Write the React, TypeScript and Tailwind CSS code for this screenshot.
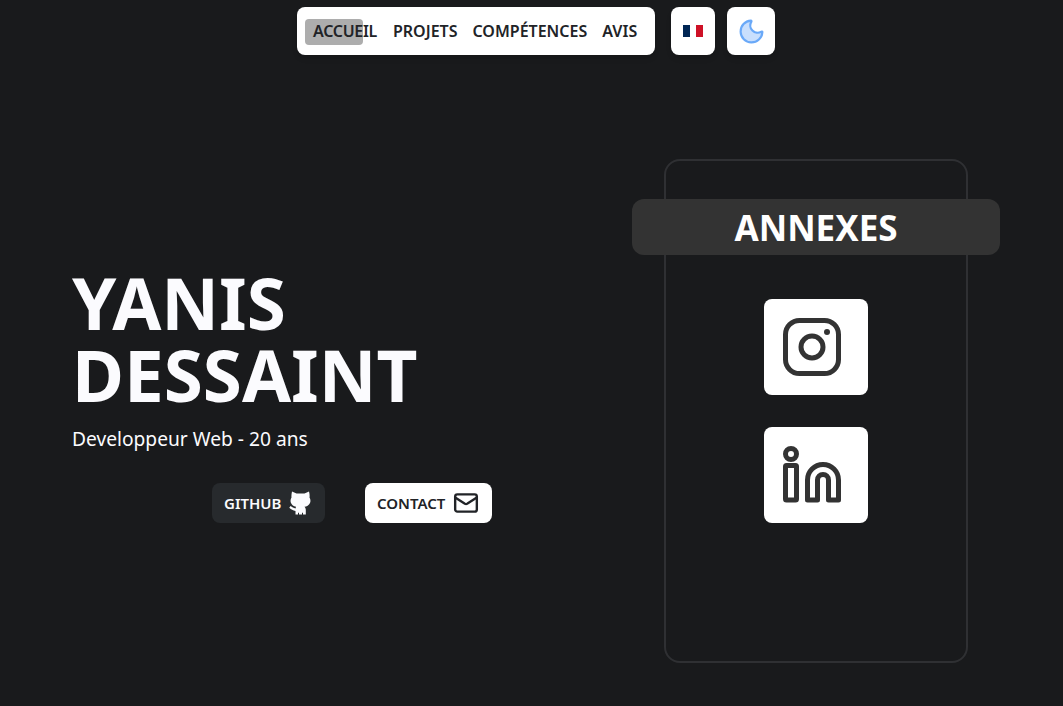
import { Mail, Moon } from 'lucide-react';

const font = { fontFamily: '"Noto Sans", "Open Sans", sans-serif' };

function Flag() {
  return (
    <div className="flex h-3 w-5">
      <span className="flex-1 bg-[#002654]" />
      <span className="flex-1 bg-white" />
      <span className="flex-1 bg-[#ce1126]" />
    </div>
  );
}

function Nav() {
  return (
    <nav className="flex justify-center gap-4 pt-[7px] pl-[9px]">
      <div className="relative flex h-12 w-[358px] items-center gap-4 rounded-lg bg-white pl-4 text-base font-semibold text-[#212327] shadow-md">
        <span className="absolute top-3 left-2 h-[26px] w-[58px] rounded bg-[#adadad]" />
        <a className="relative tracking-[-0.3px]">ACCUEIL</a>
        <a>PROJETS</a>
        <a className="-ml-[1px]">COMPÉTENCES</a>
        <a className="-ml-[1px]">AVIS</a>
      </div>
      <div className="flex gap-3">
        <button className="flex h-12 w-11 items-center justify-center rounded-lg bg-white shadow-md">
          <Flag />
        </button>
        <button className="flex h-12 w-12 items-center justify-center rounded-lg bg-white shadow-md">
          <Moon size={29} className="fill-[#c9dffd] text-[#6aa9f8]" strokeWidth={1.8} />
        </button>
      </div>
    </nav>
  );
}

function GithubCat() {
  return (
    <svg width="24" height="24" viewBox="0 0 24 24" fill="currentColor">
      <path d="M3 .5 7.5 2.5h8L20 .5c.6 2.4.8 4.4.5 6 1 1.6 1.3 3.5.5 5.5-1 2.5-3.500 3.500-5.500 3.700.9.900 1.300 2.300 1.300 3.300v4.500h-2.800v-1.800h-1v1.800h-3v-1.800h-1v1.800H6.500v-3.500C4 19.500 1.800 18.300.3 16.800l1.200-1.700c1.500 1 3.200 2 5 2.500l.5-1.900C4.500 15.300 2.800 14 2 12c-.8-2-.5-3.900.5-5.500-.2-1.600 0-3.600.5-6z" />
    </svg>
  );
}

function Hero() {
  return (
    <section className="w-[560px] pt-[212px] pl-[72px]">
      <h1 className="text-[71px] leading-[72px] font-bold text-[#fbfbfe]">
        YANIS
        <br />
        DESSAINT
      </h1>
      <p className="mt-[14px] text-[19.2px] leading-7 text-[#fbfbfe]">Developpeur Web - 20 ans</p>
      <div className="mt-[30px] ml-[140px] flex gap-10">
        <a className="flex h-10 w-[113px] items-center gap-2 rounded-lg bg-[#272a2d] pl-3 text-[15px] font-semibold text-[#fbfbfe]">
          GITHUB
          <GithubCat />
        </a>
        <a className="flex h-10 w-[127px] items-center gap-2 rounded-lg bg-white pl-3 text-[15px] font-semibold text-[#212327]">
          CONTACT
          <Mail size={26} strokeWidth={2.2} />
        </a>
      </div>
    </section>
  );
}

function Instagram() {
  return (
    <svg width="64" height="64" viewBox="0 0 64 64" fill="none" stroke="#333333" strokeWidth="5">
      <rect x="5.500" y="5.500" width="53" height="53" rx="14" />
      <circle cx="32" cy="32" r="11" />
      <circle cx="47" cy="17" r="3" fill="#333333" stroke="none" />
    </svg>
  );
}

function Linkedin() {
  return (
    <svg width="64" height="64" viewBox="0 0 64 64" fill="none" stroke="#333333" strokeWidth="5" strokeLinejoin="round">
      <circle cx="11" cy="11" r="5.500" />
      <rect x="5.500" y="22.500" width="11" height="34.500" rx="1" />
      <path d="M27.500 57V37a15.500 15.500 0 0 1 31 0v20h-10V37a5.500 5.500 0 0 0-11 0v20z" />
    </svg>
  );
}

function Annexes() {
  return (
    <aside className="mt-[104px] ml-[104px] flex h-[504px] w-[304px] flex-col items-center rounded-2xl border-2 border-[#2f3033] pt-[38px]">
      <div className="flex h-14 w-[368px] shrink-0 items-center justify-center rounded-xl bg-[#333333] pt-[2px] text-[35px] font-bold text-white">
        ANNEXES
      </div>
      <div className="mt-11 flex flex-col gap-8">
        <a className="flex h-24 w-[104px] items-center justify-center rounded-lg bg-white pr-2">
          <Instagram />
        </a>
        <a className="flex h-24 w-[104px] items-center justify-center rounded-lg bg-white pr-2">
          <Linkedin />
        </a>
      </div>
    </aside>
  );
}

export default function App() {
  return (
    <div className="h-[706px] overflow-hidden bg-[#191a1c]" style={font}>
      <Nav />
      <main className="flex">
        <Hero />
        <Annexes />
      </main>
    </div>
  );
}
